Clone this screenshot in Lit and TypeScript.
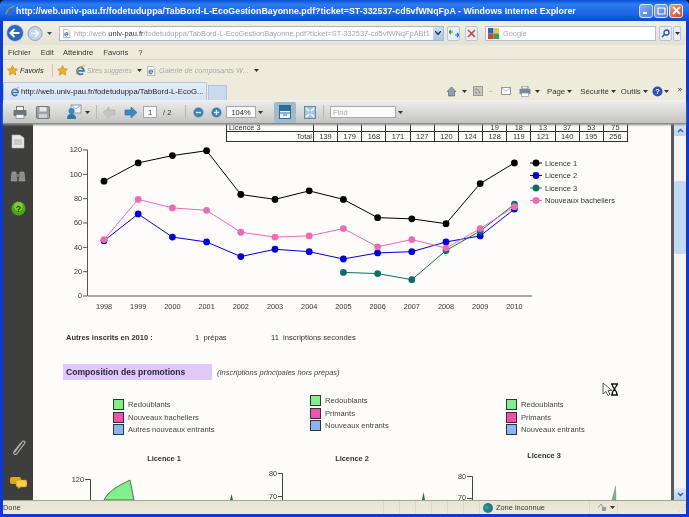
import { LitElement, html, css, svg } from "lit";
import { customElement } from "lit/decorators.js";

const IE = (s = 11) => html`<svg width=${s} height=${s} viewBox="0 0 12 12" class="ic"><path d="M2.200 6.500h7.600a3.800 3.800 0 1 0-1 2.600" fill="none" stroke="#2a78c8" stroke-width="1.900"/><path d="M1 10C2.500 4 8 0 11 1" fill="none" stroke="#e8a820" stroke-width="1.100"/></svg>`;
const PAGEIE = (s = 11) => html`<svg width=${s} height=${s} viewBox="0 0 12 12" class="ic"><path d="M2 .5h6l2.500 2.500v8.500h-8.500z" fill="#fff" stroke="#8a94a0" stroke-width=".8"/><path d="M3.800 7.200h4.400a2.300 2.300 0 1 0-.6 1.500" fill="none" stroke="#2a78c8" stroke-width="1.300"/><path d="M3 10C4 6.500 7 4 9.500 4" fill="none" stroke="#e8a820" stroke-width=".8"/></svg>`;
const ARR = html`<svg width="5" height="3" viewBox="0 0 5 3" class="ic"><path d="M0 0h5L2.500 3z" fill="#333"/></svg>`;
const STAR = (s = 11) => html`<svg width=${s} height=${s} viewBox="0 0 12 12" class="ic"><path d="M6 .5l1.700 3.600 3.800.5-2.800 2.600.8 3.800L6 9.100 2.500 11l.8-3.800L.5 4.600l3.800-.5z" fill="#f0b020" stroke="#b87810" stroke-width=".6"/></svg>`;
const GAP = (w: number) => html`<span style="width:${w}px;flex:none"></span>`;

const YEARS = [1998, 1999, 2000, 2001, 2002, 2003, 2004, 2005, 2006, 2007, 2008, 2009, 2010];
const SERIES: { name: string; color: string; from: number; v: number[] }[] = [
  { name: "Licence 1", color: "#000000", from: 0, v: [94, 109, 115, 119, 83, 79, 86, 79, 64, 63, 59, 92, 109] },
  { name: "Licence 2", color: "#0000e0", from: 0, v: [45, 67, 48, 44, 32, 38, 36, 30, 35, 36, 44, 49, 71] },
  { name: "Licence 3", color: "#0e6e64", from: 7, v: [19, 18, 13, 37, 53, 75] },
  { name: "Nouveaux bacheliers", color: "#f06ab2", from: 0, v: [46, 79, 72, 70, 52, 48, 49, 55, 40, 46, 39, 55, 73] },
];
const X = (i: number) => 104 + i * 34.2;
const Y = (v: number) => 295 - v * 1.2167;

const TOTALS = [139, 179, 168, 171, 127, 120, 124, 128, 119, 121, 140, 195, 256];
const L3ROW = ["", "", "", "", "", "", "", 19, 18, 13, 37, 53, 75];

const LEGENDS = [
  { cls: "g1", items: [["Redoublants", "green"], ["Nouveaux bacheliers", "pink"], ["Autres nouveaux entrants", "blue"]] },
  { cls: "g2", items: [["Redoublants", "green"], ["Primants", "pink"], ["Nouveaux entrants", "blue"]] },
  { cls: "g3", items: [["Redoublants", "green"], ["Primants", "pink"], ["Nouveaux entrants", "blue"]] },
];

@customElement("app-root")
export class AppRoot extends LitElement {
  static styles = css`
    :host { display: block; width: 689px; height: 517px; overflow: hidden; position: relative; background: #10121c; font-family: "Liberation Sans", Arial, sans-serif; font-size: 8px; color: #222; }
    .win { display: flex; flex-direction: column; height: 517px; filter: blur(0.45px); background: #0a3ad8; border-radius: 5px 5px 0 0; }
    .ic { display: block; flex: none; }
    .title { height: 21px; flex: none; display: flex; align-items: center; padding: 0 3px 0 5px; gap: 1px; background: linear-gradient(#0a4fd8, #2b7cf0 20%, #1a62e4 70%, #0a48d0); color: #fff; font-weight: bold; font-size: 8.8px; letter-spacing: .04px; white-space: nowrap; border-radius: 5px 5px 0 0; }
    .title .t { flex: 1; overflow: hidden; }
    .wb { width: 14px; height: 14px; border-radius: 3px; border: 1px solid #dfe8fa; background: linear-gradient(135deg, #8ab0f0, #4a7ee4); display: flex; align-items: center; justify-content: center; box-sizing: border-box; }
    .wb.x { background: linear-gradient(135deg, #ee9a80, #d8401c); }
    .wbs { display: flex; gap: 1px; margin-right: 3px; }
    .frame { flex: 1; display: flex; flex-direction: column; margin: 0 3px 3px; min-height: 0; background: #ece9d8; }
    .addr { height: 24px; flex: none; display: flex; align-items: center; background: linear-gradient(#f2f0e6, #e4e2d4); position: relative; padding-left: 2px; }
    .addr .box { margin-left: 1px; width: 385px; height: 15px; background: #fff; border: 1px solid #a8b8cc; box-sizing: border-box; display: flex; align-items: center; gap: 3px; padding-left: 2px; font-size: 7.45px; color: #a0a4a8; white-space: nowrap; overflow: hidden; position: relative; }
    .addr .box b { font-weight: normal; color: #333; }
    .drop { position: absolute; right: 0; top: 0; width: 10px; height: 13px; background: linear-gradient(#d0e0f8, #a8c4ec); display: flex; align-items: center; justify-content: center; }
    .sq { width: 13px; height: 15px; box-sizing: border-box; border: 1px solid #b8c4d4; border-radius: 2px; background: #e8eef6; display: flex; align-items: center; justify-content: center; margin-left: 3px; }
    .sq.stop { margin-left: 5px; }
    .sq.s1 { margin-left: 3px; }
    .sq.s2 { margin-left: 1px; width: 8px; }
    .gbox { margin-left: 7px; width: 171px; height: 15px; box-sizing: border-box; background: #fff; border: 1px solid #b4c0d0; display: flex; align-items: center; gap: 4px; padding-left: 2px; color: #a8a8a8; font-size: 7.4px; }
    .menu { height: 14px; flex: none; display: flex; align-items: center; padding-left: 5px; background: #efebdc; border-bottom: 1px solid #d8d4c2; font-size: 7.6px; color: #333; }
    .menu span { margin-right: 10px; }
    .menu span:nth-child(2) { margin-right: 9px; }
    .fav { height: 21px; flex: none; display: flex; align-items: center; padding-left: 4px; background: #efebdc; font-size: 7.4px; white-space: nowrap; }
    .fav .g { color: #a8a8a8; font-style: italic; font-size: 6.8px; }
    .fav .g.w { font-size: 7.300px; }
    .fav .f { font-style: italic; font-size: 7.200px; margin-left: 2px; width: 23px; }
    .fav i.s { width: 1px; height: 13px; background: #c8c4b4; margin: 0 4px 0 9px; flex: none; }
    .tabs { height: 20px; flex: none; display: flex; align-items: flex-end; background: #efebdc; border-bottom: 1px solid #f8f8f4; box-sizing: border-box; }
    .tab { width: 204px; height: 18px; flex: none; box-sizing: border-box; background: linear-gradient(#e4eefa, #d4e2f4); border: 1px solid #b4c4d8; border-bottom: 0; border-radius: 2px 2px 0 0; display: flex; align-items: center; gap: 1px; padding-left: 6px; font-size: 7.7px; color: #222; white-space: nowrap; overflow: hidden; }
    .newtab { width: 19px; height: 15px; flex: none; margin-left: 1px; background: #c8d9f0; border: 1px solid #b4c4d8; border-bottom: 0; box-sizing: border-box; }
    .tools { flex: 1; display: flex; align-items: center; height: 18px; padding-left: 219px; font-size: 7.8px; color: #333; white-space: nowrap; }
    .tools .m { display: flex; align-items: center; gap: 2px; flex: none; }
    .tools .dash { width: 3px; height: 1px; background: #bbb; flex: none; }
    .tools .more { font-size: 8px; margin-top: -4px; }
    .pdfbar { height: 23px; flex: none; display: flex; align-items: center; background: linear-gradient(#ececec, #d4d4d2 60%, #c4c4c2); border-bottom: 1px solid #8a8a88; box-sizing: border-box; font-size: 7.5px; color: #333; padding-left: 10px; box-shadow: 0 1px 2px #888; position: relative; z-index: 2; }
    .inp { height: 12px; background: #fafafa; border: 1px solid #a8a8a8; box-sizing: border-box; display: flex; align-items: center; justify-content: center; flex: none; }
    .inp.pg { width: 14px; } .inp.zm { width: 30px; }
    .inp.find { width: 66px; justify-content: flex-start; padding-left: 2px; color: #aaa; }
    .pg2 { width: 8px; flex: none; white-space: nowrap; }
    .sep { width: 1px; height: 14px; background: #b8b8b8; flex: none; }
    .active { width: 22px; height: 21px; flex: none; background: #9cbccc; border-radius: 2px; display: flex; align-items: center; justify-content: center; }
    .doc { flex: 1; display: flex; min-height: 0; }
    .side { width: 30px; flex: none; background: #3e3e3c; display: flex; flex-direction: column; align-items: center; padding-top: 9px; box-sizing: border-box; }
    .side .sp1 { height: 20px; } .side .sp2 { height: 18px; } .side .grow { flex: 1; } .side .sp3 { height: 21px; } .side .sp4 { height: 11px; }
    .page { flex: 1; background: #fdfcfa; overflow: hidden; min-width: 0; display: flex; flex-direction: column; border-right: 3px solid #585856; }
    .scroll { width: 12px; flex: none; background: #f4f4f2; display: flex; flex-direction: column; }
    .sbtn { height: 12px; background: linear-gradient(#dce8fa, #b8d0f4); display: flex; align-items: center; justify-content: center; border-radius: 2px; }
    .thumb { height: 73px; margin-top: 45px; background: #c4d8f6; border-radius: 2px; }
    .sgrow { flex: 1; }
    .tbl { margin-left: 193px; width: 402px; flex: none; border-bottom: 1px solid #333; border-left: 1px solid #333; box-sizing: border-box; color: #333; font-size: 7.4px; }
    .tr { display: grid; grid-template-columns: 87px repeat(13, 1fr); height: 7px; line-height: 7px; }
    .tr.tot { height: 9px; line-height: 9px; border-top: 1px solid #333; box-sizing: content-box; }
    .tr div { text-align: center; border-right: 1px solid #333; }
    .tr .lb { text-align: left; padding-left: 2px; }
    .tr.tot .lb { text-align: right; padding: 0 1px 0 0; font-weight: normal; }
    .chart, .mini { display: block; flex: none; }
    .chart text, .mini text { font-family: "Liberation Sans", Arial, sans-serif; font-size: 7.3px; fill: #333; }
    .chart text.lg { font-size: 7.5px; }
    .mini text.ct { font-size: 7.4px; font-weight: bold; }
    .ins { margin: 22px 0 0 33px; height: 10px; line-height: 10px; display: flex; flex: none; font-size: 7.6px; color: #333; white-space: pre; }
    .ins .a { width: 129px; font-weight: bold; font-size: 7.5px; }
    .ins .b { width: 76px; }
    .head { margin: 21px 0 0 30px; display: flex; align-items: center; height: 16px; flex: none; }
    .head h2 { margin: 0; width: 149px; height: 16px; line-height: 16px; padding-left: 3px; box-sizing: border-box; background: #e0c8f8; font-size: 8.6px; color: #2c2440; white-space: nowrap; }
    .head em { margin-left: 5px; font-size: 7.5px; color: #444; }
    .legs { margin: 15px 0 0 80px; height: 42px; display: grid; grid-template-columns: 197px 196px auto; flex: none; }
    .grp { display: flex; flex-direction: column; gap: 1.5px; }
    .g1, .g3 { padding-top: 4px; }
    .row { display: flex; align-items: center; gap: 4px; height: 11px; font-size: 7.6px; color: #444; white-space: nowrap; }
    .sw { width: 11px; height: 11px; box-sizing: border-box; border: 1px solid #333; }
    .sw.green { background: #80f088; } .sw.pink { background: #f850a8; } .sw.blue { background: #88b8f4; }
    .status { height: 13px; flex: none; display: flex; align-items: center; background: linear-gradient(#e8e4d2, #eeeadb); border-top: 1px solid #a8a490; box-sizing: content-box; font-size: 7.4px; color: #333; }
    .status .sgrow { flex: 1; }
    .status .cell { height: 13px; width: 16px; flex: none; border-left: 1px solid #dcd8c6; box-sizing: border-box; display: flex; align-items: center; gap: 3px; }
    .status .zone { width: 110px; padding-left: 3px; }
    .status .lock { width: 28px; padding-left: 7px; }
    .status .tail { width: 69px; justify-content: flex-end; }
    .cursor { position: absolute; left: 602px; top: 382px; }
  `;

  private mainChart() {
    const yt = [0, 20, 40, 60, 80, 100, 120];
    return svg`
      <path d="M87.5 149V295.5H532" fill="none" stroke="#555" stroke-width="1"/>
      ${yt.map((v) => svg`<path d="M83 ${Y(v) + 0.5}H87" stroke="#555"/><text x="82" y=${Y(v) + 2.7} text-anchor="end">${v}</text>`)}
      ${YEARS.map((y, i) => svg`<text x=${X(i)} y="308" text-anchor="middle">${y}</text>`)}
      ${SERIES.map((s) => svg`<polyline fill="none" stroke=${s.color} stroke-width="1" points=${s.v.map((v, i) => `${X(i + s.from)},${Y(v)}`).join(" ")}/>
        ${s.v.map((v, i) => svg`<circle cx=${X(i + s.from)} cy=${Y(v)} r="3.4" fill=${s.color}/>`)}`)}
      ${SERIES.map((s, i) => { const y = 162.5 + i * 12.5; return svg`<path d="M530 ${y}H542" stroke=${s.color}/><circle cx="536" cy=${y} r="3.4" fill=${s.color}/><text class="lg" x="545" y=${y + 2.7}>${s.name}</text>`; })}
    `;
  }

  private miniCharts() {
    return svg`
      <text class="ct" x="164" y="461" text-anchor="middle">Licence 1</text>
      <text class="ct" x="352" y="461" text-anchor="middle">Licence 2</text>
      <text class="ct" x="544" y="458" text-anchor="middle">Licence 3</text>
      <path d="M85 479.5H90.5V500M278 473.5H282.5V500M278 496.5H282.5M467 476.5H472.5V500M467 498.5H472.5" fill="none" stroke="#444"/>
      <text x="84" y="482" text-anchor="end">120</text>
      <text x="277" y="476" text-anchor="end">80</text><text x="277" y="499" text-anchor="end">70</text>
      <text x="466" y="479" text-anchor="end">80</text><text x="466" y="500" text-anchor="end">70</text>
      <path d="M104 500Q108 490 130 480L134 500Z" fill="#80f088" stroke="#333" stroke-width=".7"/>
      <path d="M230 500L231.5 494L233 500Z" fill="#2e6a4a"/>
      <path d="M422 500L423.5 492L425 500Z" fill="#2e6a4a"/>
      <path d="M612 500L615.5 486L616 500Z" fill="#70b888" stroke="#557" stroke-width=".3"/>
    `;
  }

  render() {
    return html`
      <div class="win">
        <div class="title">
          ${IE(10)}
          <div class="t">http://web.univ-pau.fr/fodetuduppa/TabBord-L-EcoGestionBayonne.pdf?ticket=ST-332537-cd5vfWNqFpA - Windows Internet Explorer</div>
          <div class="wbs">
            <div class="wb"><svg width="9" height="9" viewBox="0 0 9 9"><path d="M1 7h4" stroke="#fff" stroke-width="2"/></svg></div>
            <div class="wb"><svg width="9" height="9" viewBox="0 0 9 9"><path d="M1 2h7v6H1z" fill="none" stroke="#fff" stroke-width="1.2"/></svg></div>
            <div class="wb x"><svg width="9" height="9" viewBox="0 0 9 9"><path d="M1 1l7 7M8 1L1 8" stroke="#fff" stroke-width="1.8"/></svg></div>
          </div>
        </div>
        <div class="frame">
          <div class="addr">
            <svg width="53" height="20" viewBox="0 0 53 20" class="ic">
              <circle cx="30" cy="10.5" r="7" fill="#c4d4e8" stroke="#8ca4c4"/><path d="M26 10.5h7M30 7l3.5 3.5L30 14" fill="none" stroke="#f0f4fa" stroke-width="1.6"/>
              <circle cx="10" cy="10" r="8.5" fill="#2a68c0" stroke="#c8d8ec"/><path d="M14.5 10H6M9.5 6L5.5 10l4 4" fill="none" stroke="#fff" stroke-width="2"/>
              <path d="M42 9h5l-2.5 3z" fill="#35507a"/>
            </svg>
            <div class="box">${PAGEIE(9)}<span>http://web.<b>univ-pau.fr</b>/fodetuduppa/TabBord-L-EcoGestionBayonne.pdf?ticket=ST-332537-cd5vfWNqFpABt1</span>
              <div class="drop"><svg width="6" height="4" viewBox="0 0 6 4"><path d="M0 0l3 3.5L6 0" fill="none" stroke="#234" stroke-width="1.4"/></svg></div>
            </div>
            <div class="sq"><svg width="10" height="9" viewBox="0 0 10 9"><path d="M0 3h4M2 1l-2 2 2 2" fill="none" stroke="#2a9a2a" stroke-width="1.2"/><path d="M10 6H6M8 4l2 2-2 2" fill="none" stroke="#1a70c8" stroke-width="1.2"/></svg></div>
            <div class="sq stop"><svg width="9" height="9" viewBox="0 0 9 9"><path d="M1 1l7 7M8 1L1 8" stroke="#c83c3c" stroke-width="1.5"/></svg></div>
            <div class="gbox">
              <svg width="11" height="11" viewBox="0 0 11 11" class="ic"><rect width="5.5" height="5.5" fill="#2a62c8"/><rect x="5.5" width="5.5" height="5.5" fill="#e0d040"/><rect y="5.5" width="5.5" height="5.5" fill="#d84030"/><rect x="5.5" y="5.5" width="5.5" height="5.5" fill="#3aa040"/></svg>
              Google
            </div>
            <div class="sq s1"><svg width="9" height="9" viewBox="0 0 9 9"><circle cx="5.5" cy="3.5" r="2.5" fill="none" stroke="#1c50a8" stroke-width="1.3"/><path d="M3.5 5.5L1 8" stroke="#1c50a8" stroke-width="1.5"/></svg></div>
            <div class="sq s2">${ARR}</div>
          </div>
          <div class="menu"><span>Fichier</span><span>Edit</span><span>Atteindre</span><span>Favoris</span><span>?</span></div>
          <div class="fav">
            ${STAR(11)}<span class="f">Favoris</span><i class="s"></i>
            ${STAR(11)}${GAP(7)}${IE(11)}${GAP(1)}<span class="g">Sites suggérés</span>${GAP(5)}${ARR}${GAP(4)}
            ${PAGEIE(10)}${GAP(3)}<span class="g w">Galerie de composants W...</span>${GAP(5)}${ARR}
          </div>
          <div class="tabs">
            <div class="tab">${IE(10)}http://web.univ-pau.fr/fodetuduppa/TabBord-L-EcoG...</div>
            <div class="newtab"></div>
            <div class="tools">
              <svg width="11" height="11" viewBox="0 0 11 11" class="ic"><path d="M5.5 1L1 5.5h1.5V10h6V5.5H10z" fill="#8aa0b4" stroke="#556" stroke-width=".6"/></svg>
              ${GAP(5)}${ARR}${GAP(6)}
              <svg width="10" height="10" viewBox="0 0 10 10" class="ic"><rect x=".5" y=".5" width="9" height="9" fill="#c8c8bc" stroke="#999"/><path d="M2 3a5 5 0 0 1 5 5M2 6a2 2 0 0 1 2 2" fill="none" stroke="#8a8a80"/></svg>
              ${GAP(6)}<i class="dash"></i>${GAP(9)}
              <svg width="10" height="8" viewBox="0 0 10 8" class="ic"><rect x=".5" y=".5" width="9" height="7" fill="#fff" stroke="#999"/><path d="M1 1l4 3 4-3" fill="none" stroke="#bbb"/></svg>
              ${GAP(8)}
              <svg width="12" height="11" viewBox="0 0 12 11" class="ic"><rect x="3" y="0" width="6" height="3" fill="#eee" stroke="#889"/><rect x=".5" y="3" width="11" height="5" fill="#7c8a98"/><rect x="2.5" y="7" width="7" height="3.5" fill="#fff" stroke="#889" stroke-width=".6"/></svg>
              ${GAP(4)}${ARR}${GAP(7)}
              <span class="m">Page ${ARR}</span>${GAP(8)}<span class="m">Sécurité ${ARR}</span>${GAP(5)}<span class="m">Outils ${ARR}</span>${GAP(4)}
              <svg width="11" height="11" viewBox="0 0 11 11" class="ic"><circle cx="5.5" cy="5.5" r="5" fill="#2a50b8"/><text x="5.5" y="8.2" text-anchor="middle" font-size="7.5" font-weight="bold" fill="#fff">?</text></svg>
              ${GAP(1)}${ARR}${GAP(9)}<span class="more">»</span>
            </div>
          </div>
          <div class="pdfbar">
            <svg width="14" height="13" viewBox="0 0 14 13" class="ic"><rect x="3.5" y=".5" width="7" height="4" fill="#f0f0f0" stroke="#777"/><rect x=".5" y="4" width="13" height="6" rx="1" fill="#6c7478"/><rect x="3" y="8.5" width="8" height="4" fill="#f4f4f4" stroke="#777" stroke-width=".7"/></svg>
            ${GAP(9)}
            <svg width="14" height="13" viewBox="0 0 14 13" class="ic"><rect x=".5" y=".5" width="13" height="12" rx="1" fill="#9aa0a4" stroke="#777"/><rect x="3.5" y="1" width="7" height="4.5" fill="#e8e8e8"/><rect x="3" y="8" width="8" height="4" fill="#d0d0d0"/></svg>
            ${GAP(16)}
            <svg width="16" height="16" viewBox="0 0 16 16" class="ic"><rect x="5" y="1" width="10" height="8" fill="#eef2f6" stroke="#7c8a98" stroke-width=".8"/><path d="M5 1l5 4 5-4" fill="none" stroke="#7c8a98" stroke-width=".7"/><circle cx="5.5" cy="7" r="3" fill="#3c88b4"/><path d="M1 15c0-4 2-5 4.5-5s4.5 1 4.5 5z" fill="#2c78a8"/></svg>
            ${GAP(3)}${ARR}${GAP(6)}<i class="sep"></i>${GAP(6)}
            <svg width="13" height="13" viewBox="0 0 13 13" class="ic"><path d="M0 6.5L6 1v3h6v5H6v3z" fill="#c4c4c4" stroke="#b0b0b0" stroke-width=".6"/></svg>
            ${GAP(8)}
            <svg width="13" height="13" viewBox="0 0 13 13" class="ic"><path d="M13 6.5L7 1v3H1v5h6v3z" fill="#3c88c0" stroke="#2c6c9c" stroke-width=".6"/></svg>
            ${GAP(6)}
            <div class="inp pg">1</div>${GAP(6)}<span class="pg2">/ 2</span>${GAP(14)}<i class="sep"></i>${GAP(7)}
            <svg width="11" height="11" viewBox="0 0 11 11" class="ic"><circle cx="5.5" cy="5.5" r="5" fill="#3c84b4"/><path d="M3 5.5h5" stroke="#dceaf4" stroke-width="1.4"/></svg>
            ${GAP(7)}
            <svg width="11" height="11" viewBox="0 0 11 11" class="ic"><circle cx="5.5" cy="5.5" r="5" fill="#3c84b4"/><path d="M3 5.5h5M5.5 3v5" stroke="#dceaf4" stroke-width="1.4"/></svg>
            ${GAP(4)}
            <div class="inp zm">104%</div>${GAP(2)}${ARR}${GAP(11)}
            <div class="active"><svg width="12" height="14" viewBox="0 0 12 14"><rect x=".5" y=".5" width="11" height="13" fill="#eef4f8" stroke="#2c6c9c"/><rect x="1" y="1" width="10" height="5" fill="#2c6c9c"/><path d="M1 8h10M4 10h4" stroke="#2c6c9c"/></svg></div>
            ${GAP(8)}
            <svg width="12" height="13" viewBox="0 0 12 13" class="ic"><rect x=".5" y=".5" width="11" height="12" fill="#a8c4dc" stroke="#5c8cb4"/><path d="M2 2l3 3M10 2L7 5M2 11l3-3M10 11L7 8" stroke="#fff" stroke-width="1.4"/></svg>
            ${GAP(7)}<i class="sep"></i>${GAP(6)}
            <div class="inp find">Find</div>${GAP(2)}${ARR}
          </div>
          <div class="doc">
            <div class="side">
              <svg width="14" height="16" viewBox="0 0 14 16" class="ic"><path d="M1 2h8l4 3v10H1z" fill="#e8e8e4" stroke="#bbb" stroke-width=".6"/><path d="M3 7h8M3 9h8M3 11h8" stroke="#aaa"/></svg>
              <span class="sp1"></span>
              <svg width="16" height="14" viewBox="0 0 16 14" class="ic"><path d="M2 3h4l1 9H1zM10 3h4l1 9H9z" fill="#8c8c8a" stroke="#a8a8a6" stroke-width=".6"/><rect x="6" y="5" width="4" height="3" fill="#777"/></svg>
              <span class="sp2"></span>
              <svg width="15" height="15" viewBox="0 0 15 15" class="ic"><circle cx="7.5" cy="7.5" r="7" fill="#4aa810"/><circle cx="7.5" cy="5.5" r="4.5" fill="#80cc28"/><text x="7.5" y="11" text-anchor="middle" font-size="9" font-weight="bold" fill="#12400a">?</text></svg>
              <span class="grow"></span>
              <svg width="15" height="18" viewBox="0 0 15 18" class="ic"><path d="M4 14L11 4c1.5-2 4-.5 2.5 1.5L6 15.5c-1.5 2-4.5 0-3-2L10 5" fill="none" stroke="#b4b4b2" stroke-width="1.2"/></svg>
              <span class="sp3"></span>
              <svg width="17" height="12" viewBox="0 0 17 12" class="ic"><rect x="0" y="0" width="11" height="7" rx="2" fill="#e0a818"/><rect x="6" y="3" width="11" height="7" rx="2" fill="#f8d040" stroke="#b88410" stroke-width=".5"/><path d="M8 10v2l3-2z" fill="#e0a818"/></svg>
              <span class="sp4"></span>
            </div>
            <div class="page">
              <div class="tbl">
                <div class="tr"><div class="lb">Licence 3</div>${L3ROW.map((c) => html`<div>${c}</div>`)}</div>
                <div class="tr tot"><div class="lb">Total</div>${TOTALS.map((c) => html`<div>${c}</div>`)}</div>
              </div>
              <svg class="chart" width="638" height="169" viewBox="33 141.5 638 169">${this.mainChart()}</svg>
              <div class="ins"><span class="a">Autres inscrits en 2010 :</span><span class="b">1  prépas</span><span>11  inscriptions secondes</span></div>
              <div class="head"><h2>Composition des promotions</h2><em>(Inscriptions principales hors prépas)</em></div>
              <div class="legs">
                ${LEGENDS.map((g) => html`<div class="grp ${g.cls}">${g.items.map(([t, c]) => html`<div class="row"><i class="sw ${c}"></i>${t}</div>`)}</div>`)}
              </div>
              <svg class="mini" width="638" height="63" viewBox="33 437 638 63">${this.miniCharts()}</svg>
            </div>
            <div class="scroll">
              <div class="sbtn"><svg width="7" height="5" viewBox="0 0 7 5"><path d="M1 4l2.5-2.5L6 4" fill="none" stroke="#2a5aa0" stroke-width="1.4"/></svg></div>
              <div class="thumb"></div>
              <span class="sgrow"></span>
              <div class="sbtn"><svg width="7" height="5" viewBox="0 0 7 5"><path d="M1 1l2.5 2.5L6 1" fill="none" stroke="#2a5aa0" stroke-width="1.4"/></svg></div>
            </div>
          </div>
          <div class="status">
            <div>Done</div>
            <span class="sgrow"></span>
            ${[0, 1, 2, 3, 4, 5].map(() => html`<div class="cell"></div>`)}
            <div class="cell zone">
              <svg width="10" height="10" viewBox="0 0 10 10" class="ic"><circle cx="5" cy="5" r="5" fill="#1e7c98"/><path d="M1 4c2-2 4-1 5 0s-1 3-3 2z" fill="#3aa860"/></svg>
              Zone inconnue
            </div>
            <div class="cell lock">
              <svg width="10" height="9" viewBox="0 0 10 9" class="ic"><path d="M1 5l3-4 3 4" fill="none" stroke="#999"/><rect x="5" y="4" width="4" height="4" fill="#999"/></svg>
              ${ARR}
            </div>
            <div class="cell tail">
              <svg width="9" height="9" viewBox="0 0 9 9" class="ic"><path d="M8 1v.5M5 4v.5M8 4v.5M2 7v.5M5 7v.5M8 7v.5" stroke="#b8b4a4" stroke-width="1.2"/></svg>
            </div>
          </div>
        </div>
      </div>
      <svg class="cursor" width="17" height="15" viewBox="0 0 17 15">
        <path d="M1 1v11l3-2.5 2 4 2-1-2-4h4z" fill="#fff" stroke="#333" stroke-width=".8"/>
        <path d="M9 2h7M9 13h7M10 2c0 4 5 5 5 11M15 2c0 4-5 5-5 11" fill="none" stroke="#111" stroke-width="1.3"/>
      </svg>
    `;
  }
}
